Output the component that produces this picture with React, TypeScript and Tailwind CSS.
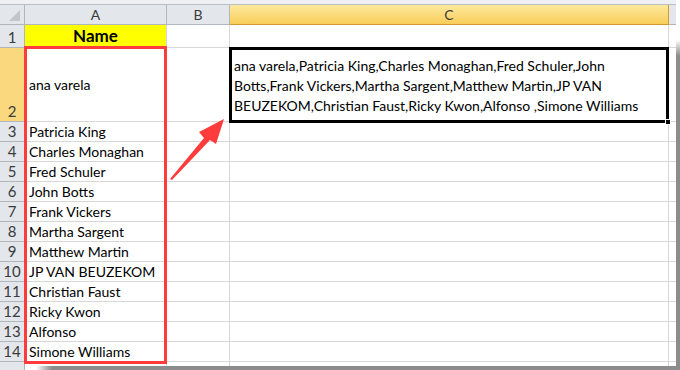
const names = [
  'Patricia King',
  'Charles Monaghan',
  'Fred Schuler',
  'John Botts',
  'Frank Vickers',
  'Martha Sargent',
  'Matthew Martin',
  'JP VAN BEUZEKOM',
  'Christian Faust',
  'Ricky Kwon',
  'Alfonso',
  'Simone Williams',
];

const font = { fontFamily: 'Lato, "Open Sans", sans-serif' };

function RowHead({ n, active, className = '' }: { n?: number; active?: boolean; className?: string }) {
  return (
    <div
      className={`flex w-[25px] shrink-0 justify-center border-r border-b border-[#b1b6bd] text-[15px] text-[#3b3b3b] ${
        active ? 'bg-[#fad97e]' : 'bg-[#e3e6ea]'
      } ${className}`}
    >
      {n}
    </div>
  );
}

export default function App() {
  return (
    <div className="relative h-[370px] w-[680px] overflow-hidden bg-white text-black" style={font}>
      <div className="w-[676px]">
        {/* top strip */}
        <div className="h-[5px] border-b border-[#b9bec5] bg-[#eef0f3]" />

        {/* column headers */}
        <div className="flex h-[20px] text-[14px] leading-[19px] text-[#3b3b3b]">
          <div className="relative w-[25px] shrink-0 border-r border-b border-[#b1b6bd] bg-[#e3e6ea]">
            <svg className="absolute right-[4px] bottom-[3px]" width="11" height="11" viewBox="0 0 11 11">
              <polygon points="11,0 11,11 0,11" fill="#c2c6cc" />
            </svg>
          </div>
          <div className="w-[142px] shrink-0 border-r border-b border-[#b1b6bd] bg-[#e3e6ea] text-center">A</div>
          <div className="w-[63px] shrink-0 border-r border-b border-[#b1b6bd] bg-[#e3e6ea] text-center">B</div>
          <div className="w-[439px] shrink-0 border-r border-b border-[#d39a2c] bg-gradient-to-b from-[#fde99c] to-[#f8cd58] text-center">
            C
          </div>
          <div className="flex-1 border-b border-[#b1b6bd] bg-[#e3e6ea]" />
        </div>

        {/* row 1 */}
        <div className="flex h-[23px]">
          <RowHead n={1} className="items-end leading-[20px]" />
          <div className="w-[142px] shrink-0 border-r border-b border-[#d8d8d8] bg-[#ffff00] text-center text-[17px] leading-[22px] font-bold">
            Name
          </div>
          <div className="w-[63px] shrink-0 border-r border-b border-[#d8d8d8]" />
          <div className="w-[439px] shrink-0 border-r border-b border-[#d8d8d8]" />
          <div className="flex-1 border-b border-[#d8d8d8]" />
        </div>

        {/* row 2 */}
        <div className="flex h-[74px]">
          <RowHead n={2} active className="items-end leading-[20px]" />
          <div className="flex w-[142px] shrink-0 items-center border-r border-b border-[#d8d8d8] pl-[4px] text-[14px]">
            ana varela
          </div>
          <div className="w-[63px] shrink-0 border-r border-b border-[#d8d8d8]" />
          <div className="w-[439px] shrink-0 border-r border-b border-[#d8d8d8] pt-[8px] pl-[4px] text-[14px] leading-[20px] whitespace-nowrap">
            ana varela,Patricia King,Charles Monaghan,Fred Schuler,John
            <br />
            Botts,Frank Vickers,Martha Sargent,Matthew Martin,JP VAN
            <br />
            BEUZEKOM,Christian Faust,Ricky Kwon,Alfonso ,Simone Williams
          </div>
          <div className="flex-1 border-b border-[#d8d8d8]" />
        </div>

        {/* rows 3-14 */}
        {names.map((name, i) => (
          <div key={name} className="flex h-[20px] leading-[19px]">
            <RowHead n={i + 3} />
            <div className="w-[142px] shrink-0 border-r border-b border-[#d8d8d8] pl-[4px] text-[14px] whitespace-nowrap">
              {name}
            </div>
            <div className="w-[63px] shrink-0 border-r border-b border-[#d8d8d8]" />
            <div className="w-[439px] shrink-0 border-r border-b border-[#d8d8d8]" />
            <div className="flex-1 border-b border-[#d8d8d8]" />
          </div>
        ))}

        {/* partial row 15 */}
        <div className="flex h-[10px]">
          <RowHead />
          <div className="w-[142px] shrink-0 border-r border-[#d8d8d8]" />
          <div className="w-[63px] shrink-0 border-r border-[#d8d8d8]" />
          <div className="w-[439px] shrink-0 border-r border-[#d8d8d8]" />
        </div>
      </div>

      {/* selected cell C2 */}
      <div className="absolute top-[47px] left-[229px] h-[76px] w-[440px] border-[3px] border-black" />
      <div className="absolute top-[119px] left-[665px] h-[6px] w-[6px] border border-white bg-black" />

      {/* red highlight box */}
      <div className="absolute top-[46px] left-[24px] h-[318px] w-[143px] border-[3px] border-[#ff3b3b]" />

      {/* arrow */}
      <svg className="absolute top-0 left-0" width="680" height="370" viewBox="0 0 680 370">
        <polygon
          points="170,179 204,138 199,132 224,119 216,144 210,140 172,180"
          fill="#ff3b3b"
        />
      </svg>

      {/* page shadow */}
      <div className="absolute top-[40px] right-0 h-[16px] w-[4px] bg-gradient-to-b from-white to-[#8c8c8c]" />
      <div className="absolute top-[56px] right-0 bottom-0 w-[4px] bg-[#8c8c8c]" />
      <div className="absolute bottom-0 left-[36px] h-[4px] w-[16px] bg-gradient-to-r from-white to-[#8c8c8c]" />
      <div className="absolute right-0 bottom-0 left-[52px] h-[4px] bg-[#8c8c8c]" />
    </div>
  );
}
